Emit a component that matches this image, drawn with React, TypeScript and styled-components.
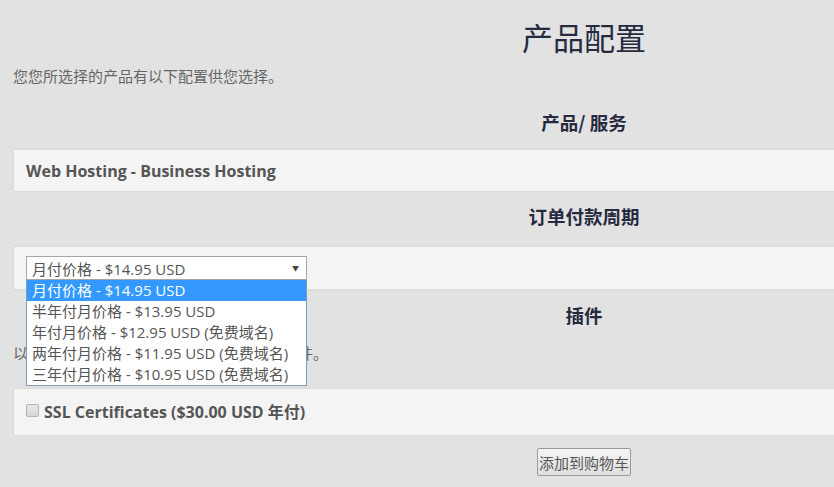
import styled, { createGlobalStyle } from "styled-components";

const GlobalStyle = createGlobalStyle`
    html, body {
        margin: 0;
        padding: 0;
        background: #e2e2e2;
        overflow: hidden;
        font-family: "Open Sans", "Noto Sans CJK SC", sans-serif;
    }
`;

const cycles = [
    { name: "月付价格", price: "$14.95 USD", free: false },
    { name: "半年付月价格", price: "$13.95 USD", free: false },
    { name: "年付月价格", price: "$12.95 USD", free: true },
    { name: "两年付月价格", price: "$11.95 USD", free: true },
    { name: "三年付月价格", price: "$10.95 USD", free: true },
];

const Page = styled.div`
    padding-left: 14px;
    width: 1140px;
    display: flex;
    flex-direction: column;
`;

const Title = styled.h1`
    margin: 22px 0 0;
    text-align: center;
    font-family: "Liberation Serif", "Noto Sans CJK SC", serif;
    font-weight: 400;
    font-size: 31px;
    line-height: 36px;
    color: #262a3e;
`;

const Desc = styled.p<{ top: number }>`
    margin: ${props => props.top}px 0 0 -1px;
    font-family: "Noto Sans CJK SC", sans-serif;
    font-size: 15px;
    line-height: 20px;
    color: #666;
`;

const Heading = styled.h3<{ top: number }>`
    margin: ${props => props.top}px 0 0;
    text-align: center;
    font-family: "Noto Sans CJK SC", sans-serif;
    font-weight: 700;
    font-size: 18.5px;
    line-height: 24px;
    color: #262a3e;
`;

const Panel = styled.div<{ top: number; h: number }>`
    position: relative;
    margin-top: ${props => props.top}px;
    height: ${props => props.h}px;
    box-sizing: border-box;
    padding: 0 12px;
    background: #f4f4f4;
    box-shadow: 0 0 3px rgba(0, 0, 0, 0.08);
    display: flex;
    align-items: center;
    z-index: 1;
`;

const ProductName = styled.div`
    font-weight: 700;
    font-size: 16px;
    color: #555;
`;

const SelectWrap = styled.div`
    position: relative;
    align-self: flex-start;
    margin-top: 9px;
    width: 281px;
`;

const SelectBox = styled.div`
    height: 24px;
    box-sizing: border-box;
    border: 1px solid #a6a6a6;
    background: #fff;
    display: flex;
    align-items: center;
    justify-content: space-between;
    padding: 0 7px 0 5px;
    font-size: 15px;
    color: #555;
    > .arrow {
        font-size: 7px;
        color: #444;
    }
`;

const OptionList = styled.ul`
    position: absolute;
    top: 24px;
    left: 0;
    width: 281px;
    box-sizing: border-box;
    margin: 0;
    padding: 0;
    list-style: none;
    background: #fff;
    border: 1px solid #7f9db9;
    border-top: 0;
    z-index: 10;
`;

const OptionItem = styled.li<{ active?: boolean }>`
    height: 21px;
    line-height: 21px;
    padding-left: 5px;
    font-size: 15px;
    white-space: nowrap;
    color: ${props => (props.active ? "#fff" : "#555")};
    background: ${props => (props.active ? "#3399ff" : "transparent")};
`;

const CheckRow = styled.label`
    display: flex;
    align-items: center;
    gap: 5px;
    margin-top: -3px;
    font-weight: 700;
    font-size: 16px;
    color: #555;
    > .box {
        width: 11px;
        height: 11px;
        border: 1px solid #b4b4b4;
        border-radius: 2px;
        background: linear-gradient(#e8e8e8, #d6d6d6);
    }
`;

const Actions = styled.div`
    display: flex;
    justify-content: center;
    margin-top: 13px;
`;

const CartButton = styled.button`
    height: 28px;
    padding: 0 1px;
    border: 1px solid #9a9a9a;
    border-radius: 2px;
    background: linear-gradient(#f6f6f6, #dedede);
    font-family: "Noto Sans CJK SC", sans-serif;
    font-size: 15px;
    color: #555;
`;

function App() {
    return (
        <>
            <GlobalStyle />
            <Page>
                <Title>产品配置</Title>
                <Desc top={8}>您您所选择的产品有以下配置供您选择。</Desc>

                <Heading top={24}>产品/ 服务</Heading>
                <Panel top={16} h={41}>
                    <ProductName>Web Hosting - Business Hosting</ProductName>
                </Panel>

                <Heading top={13}>订单付款周期</Heading>
                <Panel top={19} h={42}>
                    <SelectWrap>
                        <SelectBox>
                            <span>{cycles[0].name} - {cycles[0].price}</span>
                            <span className="arrow">▼</span>
                        </SelectBox>
                        <OptionList>
                            {cycles.map((c, i) => (
                                <OptionItem key={c.name} active={i === 0}>
                                    {c.name} - {c.price}{c.free ? " (免费域名)" : ""}
                                </OptionItem>
                            ))}
                        </OptionList>
                    </SelectWrap>
                </Panel>

                <Heading top={14}>插件</Heading>
                <Desc top={16}>以下为本产品可用插件，您可以选择所需插件。</Desc>
                <Panel top={26} h={46}>
                    <CheckRow>
                        <span className="box" />
                        SSL Certificates ($30.00 USD 年付)
                    </CheckRow>
                </Panel>

                <Actions>
                    <CartButton>添加到购物车</CartButton>
                </Actions>
            </Page>
        </>
    );
}

export default App;
